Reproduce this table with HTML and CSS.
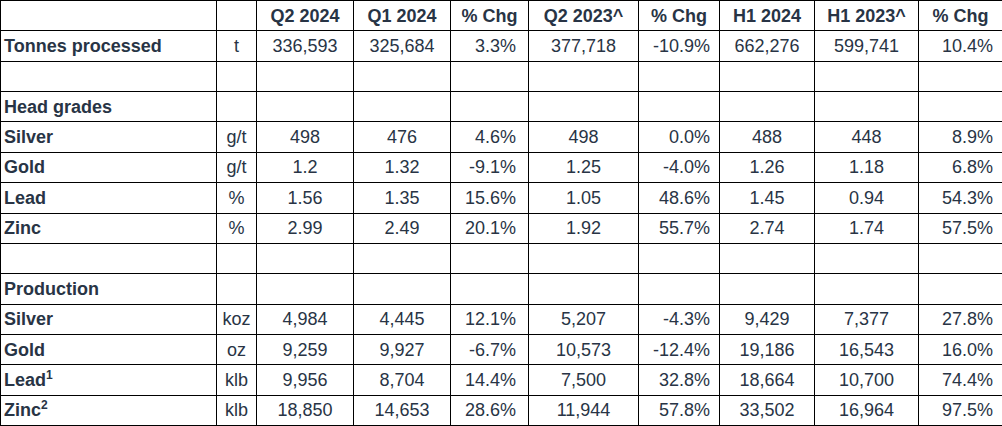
FILE: index.html
```html
<!DOCTYPE html>
<html>
<head>
<meta charset="utf-8">
<link rel="stylesheet" href="styles.css">
</head>
<body>
<table class="ops">
  <colgroup>
    <col class="c-label"><col class="c-unit"><col class="c-q2"><col class="c-q1"><col class="c-chg1">
    <col class="c-q2p"><col class="c-chg2"><col class="c-h1"><col class="c-h1p"><col class="c-chg3">
  </colgroup>
  <tr class="head">
    <th></th><th></th><th>Q2 2024</th><th>Q1 2024</th><th>% Chg</th><th>Q2 2023^</th><th>% Chg</th><th>H1 2024</th><th>H1 2023^</th><th>% Chg</th>
  </tr>
  <tr>
    <td class="label">Tonnes processed</td><td class="unit">t</td><td class="num">336,593</td><td class="num">325,684</td><td class="pct p1">3.3%</td><td class="num">377,718</td><td class="pct">-10.9%</td><td class="num">662,276</td><td class="num">599,741</td><td class="pct">10.4%</td>
  </tr>
  <tr><td></td><td></td><td></td><td></td><td></td><td></td><td></td><td></td><td></td><td></td></tr>
  <tr><td class="label">Head grades</td><td></td><td></td><td></td><td></td><td></td><td></td><td></td><td></td><td></td></tr>
  <tr>
    <td class="label">Silver</td><td class="unit">g/t</td><td class="num">498</td><td class="num">476</td><td class="pct p1">4.6%</td><td class="num">498</td><td class="pct">0.0%</td><td class="num">488</td><td class="num">448</td><td class="pct">8.9%</td>
  </tr>
  <tr>
    <td class="label">Gold</td><td class="unit">g/t</td><td class="num">1.2</td><td class="num">1.32</td><td class="pct p1">-9.1%</td><td class="num">1.25</td><td class="pct">-4.0%</td><td class="num">1.26</td><td class="num">1.18</td><td class="pct">6.8%</td>
  </tr>
  <tr>
    <td class="label">Lead</td><td class="unit">%</td><td class="num">1.56</td><td class="num">1.35</td><td class="pct p1">15.6%</td><td class="num">1.05</td><td class="pct">48.6%</td><td class="num">1.45</td><td class="num">0.94</td><td class="pct">54.3%</td>
  </tr>
  <tr>
    <td class="label">Zinc</td><td class="unit">%</td><td class="num">2.99</td><td class="num">2.49</td><td class="pct p1">20.1%</td><td class="num">1.92</td><td class="pct">55.7%</td><td class="num">2.74</td><td class="num">1.74</td><td class="pct">57.5%</td>
  </tr>
  <tr><td></td><td></td><td></td><td></td><td></td><td></td><td></td><td></td><td></td><td></td></tr>
  <tr><td class="label">Production</td><td></td><td></td><td></td><td></td><td></td><td></td><td></td><td></td><td></td></tr>
  <tr>
    <td class="label">Silver</td><td class="unit">koz</td><td class="num">4,984</td><td class="num">4,445</td><td class="pct p1">12.1%</td><td class="num">5,207</td><td class="pct">-4.3%</td><td class="num">9,429</td><td class="num">7,377</td><td class="pct">27.8%</td>
  </tr>
  <tr>
    <td class="label">Gold</td><td class="unit">oz</td><td class="num">9,259</td><td class="num">9,927</td><td class="pct p1">-6.7%</td><td class="num">10,573</td><td class="pct">-12.4%</td><td class="num">19,186</td><td class="num">16,543</td><td class="pct">16.0%</td>
  </tr>
  <tr>
    <td class="label">Lead<sup>1</sup></td><td class="unit">klb</td><td class="num">9,956</td><td class="num">8,704</td><td class="pct p1">14.4%</td><td class="num">7,500</td><td class="pct">32.8%</td><td class="num">18,664</td><td class="num">10,700</td><td class="pct">74.4%</td>
  </tr>
  <tr>
    <td class="label">Zinc<sup>2</sup></td><td class="unit">klb</td><td class="num">18,850</td><td class="num">14,653</td><td class="pct p1">28.6%</td><td class="num">11,944</td><td class="pct">57.8%</td><td class="num">33,502</td><td class="num">16,964</td><td class="pct">97.5%</td>
  </tr>
</table>
</body>
</html>
```

FILE: styles.css
```css
html, body {
  margin: 0;
  padding: 0;
  background: #ffffff;
}

.ops {
  border-collapse: collapse;
  table-layout: fixed;
  width: 1002px;
  font-family: "Liberation Sans", Arial, sans-serif;
  font-size: 18px;
  color: #283445;
}

.c-label { width: 216px; }
.c-unit { width: 40px; }
.c-q2 { width: 97px; }
.c-q1 { width: 97px; }
.c-chg1 { width: 78px; }
.c-q2p { width: 110px; }
.c-chg2 { width: 81px; }
.c-h1 { width: 95px; }
.c-h1p { width: 104px; }
.c-chg3 { width: 84px; }

.ops tr {
  height: 30.36px;
}

.ops th,
.ops td {
  border: 1px solid #000000;
  padding: 0 2px;
  line-height: 20px;
  white-space: nowrap;
  vertical-align: middle;
  overflow: visible;
}

.ops th {
  font-weight: bold;
  text-align: center;
}

.ops .label {
  font-weight: bold;
  text-align: left;
  padding-left: 3px;
}

.ops .unit {
  text-align: center;
  padding: 0;
}

.ops .num {
  text-align: center;
}

.ops .pct {
  text-align: right;
  padding-right: 9px;
}

.ops .pct.p1 {
  padding-right: 12px;
}

.ops sup {
  font-size: 12px;
  line-height: 0;
  vertical-align: 7px;
}
```
